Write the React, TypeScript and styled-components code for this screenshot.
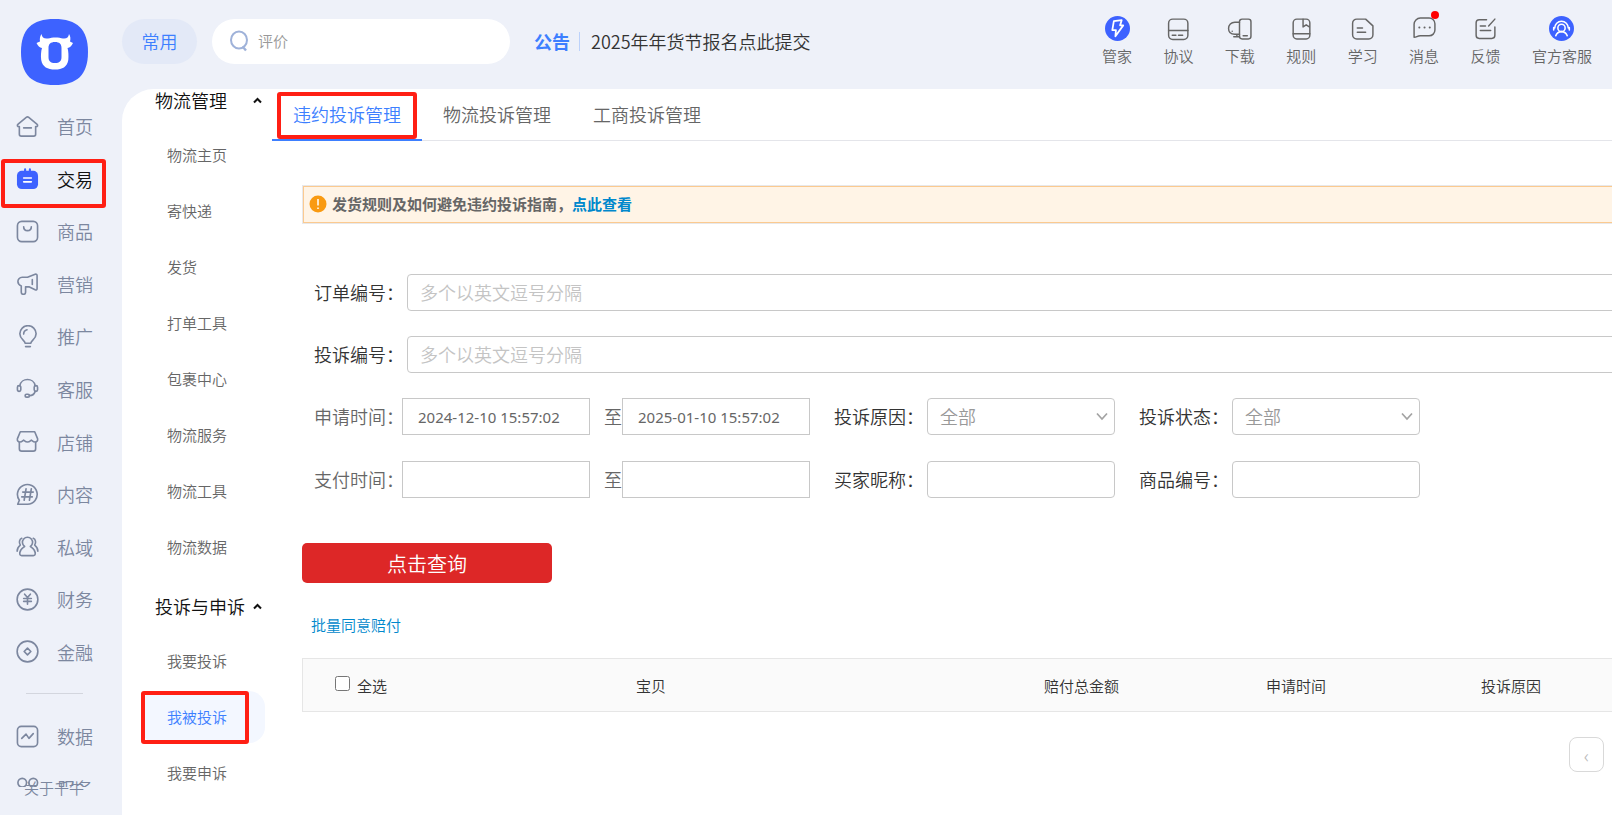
import React, { useState } from "react";
import styled, { createGlobalStyle, css } from "styled-components";

const fontStack = `"Noto Sans CJK SC", "Liberation Sans", sans-serif`;

const GlobalStyle = createGlobalStyle`
  *, *::before, *::after { box-sizing: border-box; }
  body {
    margin: 0;
    overflow: hidden;
    background: #eef1f9;
    font-family: ${fontStack};
    font-weight: 350;
    color: #333;
  }
  button, input, select { font: inherit; color: inherit; }
  button { padding: 0; border: 0; background: none; cursor: pointer; }
  a { color: inherit; text-decoration: none; }
  ul { margin: 0; padding: 0; list-style: none; }
`;

const Shell = styled.div`
  display: flex;
  height: 100vh;
`;

/* ---------- left rail ---------- */

const Rail = styled.aside`
  flex: 0 0 122px;
  display: flex;
  flex-direction: column;
  color: #7c879f;
`;

const LogoLink = styled.a`
  display: block;
  width: 67px;
  height: 66px;
  margin: 19px 0 0 21px;
  flex: none;
`;

const RailNav = styled.nav`
  flex: 1;
  min-height: 0;
  padding-top: 15px;
  overflow: hidden;
`;

const RailList = styled.ul<{ $height?: number }>`
  display: grid;
  grid-auto-rows: ${(p) => (p.$height ? "1fr" : "52px")};
  height: ${(p) => (p.$height ? `${p.$height}px` : "auto")};
`;

const RailItem = styled.li`
  position: relative;
  display: grid;
`;

const RailLink = styled.a<{ $active?: boolean }>`
  display: flex;
  align-items: center;
  gap: 18px;
  padding-left: 16px;
  font-size: 18px;
  line-height: 24px;
  color: ${(p) => (p.$active ? "#111" : "#7c879f")};
`;

const RailDivider = styled.hr`
  width: 57px;
  height: 1px;
  margin: 15px 0 16px 26px;
  border: 0;
  background: #d3d6de;
`;

const RailFooter = styled.div`
  flex: 0 0 28px;
  padding-left: 24px;
`;

const AboutLink = styled.a`
  position: relative;
  display: block;
  margin-top: -9px;
  font-size: 15px;
  line-height: 20px;
`;

const Highlight = styled.span<{ $top: number; $left: number; $w: number; $h: number }>`
  position: absolute;
  z-index: 1;
  top: ${(p) => p.$top}px;
  left: ${(p) => p.$left}px;
  width: ${(p) => p.$w}px;
  height: ${(p) => p.$h}px;
  border: 4px solid #ff1f14;
  border-radius: 3px;
  pointer-events: none;
`;

/* ---------- top bar ---------- */

const Workspace = styled.div`
  flex: 1;
  min-width: 0;
  display: flex;
  flex-direction: column;
`;

const TopBar = styled.header`
  flex: 0 0 89px;
  display: flex;
  align-items: flex-start;
  padding-right: 20px;
`;

const CommonButton = styled.button`
  flex: none;
  width: 75px;
  height: 45px;
  margin-top: 19px;
  padding-bottom: 2px;
  border-radius: 23px;
  background: #e3e9f7;
  color: #3d7fff;
  font-size: 18px;
`;

const Search = styled.label`
  flex: 0 0 298px;
  display: flex;
  align-items: center;
  gap: 8px;
  height: 45px;
  margin: 19px 0 0 15px;
  padding: 0 0 2px 17px;
  border-radius: 23px;
  background: #fff;
`;

const SearchInput = styled.input`
  flex: 1;
  min-width: 0;
  margin-right: 20px;
  padding: 0;
  border: 0;
  outline: 0;
  background: none;
  font-size: 15px;
  &::placeholder { color: #999; opacity: 1; }
`;

const Notice = styled.div`
  display: flex;
  align-items: center;
  height: 45px;
  margin: 19px auto 0 24px;
  padding-bottom: 1px;
  font-size: 18px;
  white-space: nowrap;
`;

const NoticeTag = styled.strong`
  padding-right: 9px;
  color: #3d7fff;
  font-weight: 700;
`;

const NoticeLink = styled.a`
  padding-left: 11px;
  border-left: 1px solid #bcd2fb;
  line-height: 19px;
  color: #333;
`;

const Tools = styled.nav`
  flex: 0 0 490px;
  display: flex;
  justify-content: space-between;
  margin-top: 16px;
`;

const Tool = styled.a`
  position: relative;
  display: flex;
  flex-direction: column;
  align-items: center;
  gap: 3px;
  color: #666;
  font-size: 15px;
  line-height: 24px;
  white-space: nowrap;
`;

const Dot = styled.i`
  position: absolute;
  top: -5px;
  right: 0;
  width: 8px;
  height: 8px;
  border-radius: 50%;
  background: #ff0000;
`;

/* ---------- body ---------- */

const Panel = styled.div`
  flex: 1;
  min-height: 0;
  display: flex;
  border-top-left-radius: 32px;
  background: #fff;
  overflow: hidden;
`;

const SubMenu = styled.nav`
  flex: 0 0 150px;
  overflow: hidden;
`;

const SubGroup = styled.section`
  & + & { margin-top: 22px; }
`;

const SubHeading = styled.button<{ $gap: number }>`
  display: flex;
  align-items: center;
  gap: ${(p) => p.$gap}px;
  height: 24px;
  margin-bottom: 16px;
  padding: 0 0 2px 33px;
  font-size: 18px;
  line-height: 20px;
  color: #111;
`;

const SubList = styled.ul`
  display: flex;
  flex-direction: column;
  gap: 4px;
`;

const SubItem = styled.li`
  position: relative;
  padding: 0 7px 0 19px;
`;

const SubLink = styled.a<{ $active?: boolean }>`
  display: block;
  padding-left: 26px;
  border-radius: 16px;
  background: ${(p) => (p.$active ? "#f3f7ff" : "transparent")};
  color: ${(p) => (p.$active ? "#3d7fff" : "#666")};
  font-size: 15px;
  line-height: 52px;
`;

const Main = styled.main`
  flex: 1;
  min-width: 0;
  overflow: hidden;
`;

const Tabs = styled.div`
  display: flex;
  height: 52px;
  border-bottom: 1px solid #e4e5ea;
`;

const Tab = styled.button<{ $active?: boolean }>`
  position: relative;
  width: 150px;
  height: 52px;
  font-size: 18px;
  color: ${(p) => (p.$active ? "#3d7fff" : "#666")};
  border-bottom: 2px solid ${(p) => (p.$active ? "#3d7fff" : "transparent")};
`;

const Content = styled.div`
  min-width: 1380px;
  padding: 44px 0 0 30px;
`;

const Alert = styled.p`
  display: flex;
  align-items: center;
  gap: 5px;
  height: 39px;
  margin: 0 0 50px;
  padding: 0 0 2px 6px;
  border: 1px solid #e8e8ea;
  box-shadow: inset 0 0 0 1px #fbca90;
  background: #fff4e6;
  font-size: 15px;
  font-weight: 700;
  color: #666;
`;

const BlueLink = styled.a`
  color: #0088cc;
`;

const Form = styled.form`
  display: flex;
  flex-direction: column;
  gap: 25px;
  align-items: stretch;
`;

const Row = styled.div`
  display: flex;
  align-items: center;
  height: 37px;
  padding-left: 12px;
  font-size: 18px;
  &:last-child { margin-top: 1px; }
`;

const FieldLabel = styled.label<{ $w: number; $muted?: boolean }>`
  flex: 0 0 ${(p) => p.$w}px;
  min-width: 0;
  padding-bottom: 2px;
  color: ${(p) => (p.$muted ? "#666" : "#333")};
  white-space: nowrap;
`;

const FieldGap = styled.span`
  flex: 0 0 24px;
`;

const control = css`
  height: 37px;
  border: 1px solid #c8c8c8;
  background: #fff;
  outline: 0;
`;

const WideInput = styled.input`
  ${control}
  flex: 1;
  min-width: 0;
  padding: 0 12px 2px;
  border-radius: 4px;
  &::placeholder { color: #c4c4c4; opacity: 1; }
`;

const SmallInput = styled.input`
  ${control}
  flex: 0 0 188px;
  width: 188px;
  padding: 0 12px 2px;
  border-radius: 4px;
`;

const DateInput = styled.input`
  ${control}
  flex: 0 0 188px;
  width: 188px;
  padding: 0 15px;
  font-family: "Noto Sans", sans-serif;
  font-size: 15px;
  font-weight: 400;
  color: #666;
`;

const To = styled.span`
  flex: 0 0 32px;
  padding: 0 0 2px 14px;
  color: #666;
`;

const SelectBox = styled.span`
  position: relative;
  flex: 0 0 188px;
  display: flex;
  & svg {
    position: absolute;
    top: 14px;
    right: 7px;
    pointer-events: none;
  }
`;

const Select = styled.select`
  ${control}
  width: 100%;
  padding: 0 12px 2px;
  border-radius: 4px;
  appearance: none;
  color: #999;
`;

const QueryButton = styled.button`
  width: 250px;
  height: 40px;
  margin: 45px 0 30px;
  border-radius: 5px;
  background: #dd2727;
  color: #fff;
  font-size: 20px;
`;

const BatchLink = styled(BlueLink)`
  display: block;
  width: max-content;
  margin: 0 0 21px 9px;
  font-size: 15px;
  line-height: 24px;
`;

const Table = styled.table`
  width: 100%;
  table-layout: fixed;
  border-collapse: collapse;
  background: #fafafa;
  border: 1px solid #e6e6e6;
`;

const Th = styled.th<{ $w?: number; $shift?: number; $left?: number }>`
  width: ${(p) => (p.$w ? `${p.$w}px` : "auto")};
  height: 53px;
  padding: 2px ${(p) => p.$shift || 0}px 0 ${(p) => p.$left || 0}px;
  text-align: ${(p) => (p.$left ? "left" : "center")};
  font-size: 15px;
  font-weight: 350;
  line-height: 24px;
  white-space: nowrap;
`;

const CheckLabel = styled.label`
  display: flex;
  align-items: center;
  gap: 7px;
`;

const Check = styled.input`
  width: 15px;
  height: 15px;
  margin: 0 0 6px;
`;

const Pager = styled.div`
  display: flex;
  justify-content: flex-end;
  padding: 25px 48px 0 0;
`;

const PageButton = styled.button`
  width: 35px;
  height: 35px;
  border: 1px solid #d9d9d9;
  border-radius: 8px;
  color: #bbb;
  font-size: 18px;
`;

/* ---------- drawings ---------- */

const Icon = ({ children, size = 23 }: { children: React.ReactNode; size?: number }) => (
  <svg
    width={size}
    height={size}
    viewBox="0 0 24 24"
    fill="none"
    stroke="currentColor"
    strokeWidth="1.7"
    strokeLinecap="round"
    strokeLinejoin="round"
    aria-hidden="true"
  >
    {children}
  </svg>
);

const Logo = () => (
  <svg width="67" height="66" viewBox="0 0 67 66" aria-hidden="true">
    <path
      d="M33.500 0C56 0 67 10 67 33S56 66 33.500 66 0 56 0 33 11 0 33.500 0Z"
      fill="#3d62ff"
    />
    <path
      fill="#fff"
      fillRule="evenodd"
      d="M20.500 15C21 18.500 23 20 27 19.500 31 18 38 18 42 19.500 45.500 20 47.500 18.500 48 15 49.500 17 49.800 20 49 22.500L52 24C50.500 27 49 28.500 46.500 29C47.500 32 47.700 37 47.300 41 46 48 41.500 50.500 34 50.500S21.500 48 20.200 41C19.700 37 20 32 21 29 18.500 28.500 17 27 15.500 24L19 22.500C18.500 20 19 17 20.500 15ZM34 23C29.500 23 27.500 25 27.500 29V38C27.500 42 29.500 44 34 44S40.500 42 40.500 38V29C40.500 25 38.500 23 34 23Z"
    />
  </svg>
);

const Chevron = ({ up }: { up?: boolean }) => (
  <svg width={up ? 9 : 12} height={up ? 7 : 9} viewBox={up ? "0 0 9 7" : "0 0 12 9"} fill="none" aria-hidden="true">
    {up ? (
      <path d="M1 5.500 4.500 2 8 5.500" stroke="#111" strokeWidth="2" />
    ) : (
      <path d="M1 1.500 6 7 11 1.500" stroke="#a3a3a3" strokeWidth="1.700" />
    )}
  </svg>
);

const railMain = [
  { name: "首页", icon: <path d="M3.500 12v8a2 2 0 0 0 2 2h13a2 2 0 0 0 2-2v-8M3.500 12.500c-2.200-.3-2.700-1.700-1.300-2.900L10.700 2.500a2 2 0 0 1 2.600 0L21.800 9.600c1.400 1.200.9 2.600-1.300 2.900M8 13.500h8" /> },
  {
    name: "交易",
    icon: (
      <g stroke="none">
        <rect x="1" y="4" width="22" height="19" rx="5" fill="#3d62ff" />
        <path d="M9.500 2.500v3M14.500 2.500v3" stroke="#3d62ff" strokeWidth="2.200" />
        <path d="M8 11.500h8M8 15.500h8" stroke="#fff" strokeWidth="1.700" />
      </g>
    ),
  },
  { name: "商品", icon: <><rect x="1.500" y="1.500" width="21" height="21" rx="4.500" /><path d="M8 7c0 5.500 8 5.500 8 0" /></> },
  { name: "营销", icon: <><path d="M6.500 5.500H12L20 2.300c1.200-.4 2 .2 2 1.400v13.600c0 1.200-.8 1.800-2 1.300l-6.500-3.100H10v5.500a2 2 0 0 1-4.500 0v-6.500C3 13.500 2 12 2 10s1.500-4.500 4.500-4.500Z" /><path d="M17 8v5" /></> },
  { name: "推广", icon: <><path d="M9.500 19c0-3-5.500-4-5.500-9.800a8.500 8.500 0 0 1 17 0C21 15 15.500 16 15.500 19ZM10 22.500h5" /><path d="M8 9.500c0-2.500 1.500-4 3.500-4.500" /></> },
  { name: "客服", icon: <><path d="M4 9C5.500 0.500 18.500 0.500 20 9M20 15c-1 3-2.500 4.500-6 4.500" /><rect x="1.500" y="9" width="3.500" height="6" rx="1.700" /><rect x="19" y="9" width="3.500" height="6" rx="1.700" /><rect x="9.500" y="18" width="4.500" height="3" rx="1.500" /></> },
  { name: "店铺", icon: <><path d="M4.500 1.800h15L22.500 9c.5 2.200-.6 3.500-2.500 3.500-2 0-2.700-1-4-2-1.300 1-2.200 2-4 2s-2.700-1-4-2c-1.300 1-2 2-4 2-1.900 0-3-1.300-2.500-3.500Z" /><path d="M3.500 13v6.500A2.500 2.500 0 0 0 6 22h12a2.500 2.500 0 0 0 2.500-2.500V13" /></> },
  { name: "内容", icon: <><path d="M1.800 22.200H12A10.300 10.300 0 1 0 3.500 18Z" /><path d="m10.500 6-2 12M16 6l-2 12M7 9.500h11M6 14.500h11" /></> },
  { name: "私域", icon: <><path d="M9 12a5.300 5.300 0 1 1 6 0c1 1.200 4.500 2 5 6.500.3 2-.3 3-2 3H6c-1.700 0-2.300-1-2-3 .5-4.500 4-5.300 5-6.500Z" /><path d="M6 3.500C3.500 4.500 2.800 8 4.500 10.500 2.500 12 1.200 14.500 1.200 17M18 3.500c2.500 1 3.200 4.500 1.500 7 2 1.500 3.300 4 3.300 6.500" /></> },
  { name: "财务", icon: <><circle cx="12" cy="12" r="10.800" /><path d="m9 6.500 3 3.500 3-3.500M12 10v7M8 11h8M8 14h8" /></> },
  { name: "金融", icon: <><circle cx="12" cy="12" r="10.800" /><path d="m12 8.500 3.500 3.500-3.500 3.500L8.500 12Z" /></> },
];

const railMore = [
  { name: "数据", icon: <><rect x="1.500" y="1.500" width="21" height="21" rx="4" /><path d="m6 14 4.500-4.500 3 4.500L18 9" /></> },
  { name: "服务", icon: <><circle cx="6.500" cy="6" r="4.500" /><circle cx="18" cy="6" r="4.500" /><circle cx="6.500" cy="18" r="4.500" /><circle cx="18" cy="18" r="4.500" /></> },
];

const tools = [
  { name: "管家", icon: <><circle cx="12" cy="12" r="12" fill="#3d62ff" stroke="none" /><path d="M8.500 5 16 4 14.500 9H17.500L10 19.500 10.500 13.500H7Z" stroke="#fff" /></> },
  { name: "协议", icon: <g strokeWidth="1.400"><rect x="2.500" y="3" width="18.500" height="19.500" rx="4" /><path d="M2.500 14H21M6 18.500h3.500M12 18.500h4" /></g> },
  { name: "下载", icon: <g strokeWidth="1.400"><rect x="12" y="3" width="11" height="19" rx="2.500" /><path d="M12 6H7.500C4 6 1.500 8.500 1.500 12S4 17.500 7.500 17.500H12M9.500 17.500v2.500M6.500 20H12M15.500 19h4M5 14.500v.1" /></g> },
  { name: "规则", icon: <g strokeWidth="1.400"><rect x="4" y="3" width="16" height="19" rx="3.500" /><path d="M13.500 3V10.500l3-2 3 2M4 17h16" /></g> },
  { name: "学习", icon: <g strokeWidth="1.400"><path d="M6.500 3H15L22 9.500v8.500a4 4 0 0 1-4 4H6.500a4 4 0 0 1-4-4v-11a4 4 0 0 1 4-4ZM7 11.500h5M7 15.500h8" /></g> },
  { name: "消息", dot: true, icon: <g strokeWidth="1.400"><path d="M2 20.500V8a6 6 0 0 1 6-6h8.500a5.500 5.500 0 0 1 5.500 5.500v6a5.500 5.500 0 0 1-5.500 5.500H8C5 19 4.500 20.500 2 20.500Z" /><path d="M7 11h.1M12 11h.1M17 11h.1" strokeWidth="1.900" /></g> },
  { name: "反馈", icon: <g strokeWidth="1.400"><path d="M13 3.500H6a3 3 0 0 0-3 3v12a3 3 0 0 0 3 3h12a3 3 0 0 0 3-3v-8M15 9.500l6-6.500M7 9.500h5M7 14h10" /></g> },
  { name: "官方客服", icon: <><circle cx="12" cy="12" r="12" fill="#3d62ff" stroke="none" /><g stroke="#fff" strokeWidth="1.500"><circle cx="12" cy="11.500" r="3.500" /><path d="M6.500 19c1-3 2.500-4 5.500-4s4.500 1 5.500 4M5.500 11.500a6.500 6.500 0 0 1 13 0M4.500 11v2.500M19.500 11v2.500" /></g></> },
];

const subGroups = [
  { title: "物流管理", gap: 26, items: ["物流主页", "寄快递", "发货", "打单工具", "包裹中心", "物流服务", "物流工具", "物流数据"] },
  { title: "投诉与申诉", gap: 8, items: ["我要投诉", "我被投诉", "我要申诉"] },
];

const tabNames = ["违约投诉管理", "物流投诉管理", "工商投诉管理"];

const RailEntries = ({ items, height }: { items: { name: string; icon: React.ReactNode }[]; height?: number }) => (
  <RailList $height={height}>
    {items.map((item) => (
      <RailItem key={item.name}>
        <RailLink href="#" $active={item.name === "交易"}>
          <Icon>{item.icon}</Icon>
          {item.name}
        </RailLink>
        {item.name === "交易" && <Highlight $top={6} $left={1} $w={105} $h={49} />}
      </RailItem>
    ))}
  </RailList>
);

export default function App() {
  const [from, setFrom] = useState("2024-12-10 15:57:02");
  const [to, setTo] = useState("2025-01-10 15:57:02");

  return (
    <>
      <GlobalStyle />
      <Shell>
        <Rail>
          <LogoLink href="#" aria-label="千牛">
            <Logo />
          </LogoLink>
          <RailNav>
            <RailEntries items={railMain} height={578} />
            <RailDivider />
            <RailEntries items={railMore} />
          </RailNav>
          <RailFooter>
            <AboutLink href="#">关于千牛</AboutLink>
          </RailFooter>
        </Rail>

        <Workspace>
          <TopBar>
            <CommonButton type="button">常用</CommonButton>
            <Search>
              <svg width="21" height="22" viewBox="0 0 21 22" fill="none" stroke="#9fb2d9" strokeWidth="2" aria-hidden="true">
                <ellipse cx="10" cy="10" rx="8" ry="8.500" />
                <path d="m13.500 16.500 3.500 4" strokeWidth="2.400" />
              </svg>
              <SearchInput type="text" placeholder="评价" aria-label="搜索" />
            </Search>
            <Notice>
              <NoticeTag>公告</NoticeTag>
              <NoticeLink href="#">2025年年货节报名点此提交</NoticeLink>
            </Notice>
            <Tools>
              {tools.map((tool) => (
                <Tool key={tool.name} href="#">
                  <Icon size={25}>{tool.icon}</Icon>
                  {tool.name}
                  {tool.dot && <Dot />}
                </Tool>
              ))}
            </Tools>
          </TopBar>

          <Panel>
            <SubMenu>
              {subGroups.map((group) => (
                <SubGroup key={group.title}>
                  <SubHeading type="button" $gap={group.gap}>
                    {group.title}
                    <Chevron up />
                  </SubHeading>
                  <SubList>
                    {group.items.map((name) => (
                      <SubItem key={name}>
                        <SubLink href="#" $active={name === "我被投诉"}>
                          {name}
                        </SubLink>
                        {name === "我被投诉" && <Highlight $top={0} $left={19} $w={108} $h={53} />}
                      </SubItem>
                    ))}
                  </SubList>
                </SubGroup>
              ))}
            </SubMenu>

            <Main>
              <Tabs>
                {tabNames.map((name, i) => (
                  <Tab key={name} type="button" $active={i === 0}>
                    {name}
                    {i === 0 && <Highlight $top={3} $left={5} $w={140} $h={47} />}
                  </Tab>
                ))}
              </Tabs>

              <Content>
                <Alert>
                  <svg width="18" height="18" viewBox="0 0 18 18" aria-hidden="true">
                    <circle cx="9" cy="9" r="8.500" fill="#f99a11" />
                    <path d="M9 4v6.500M9 12.500v1.600" stroke="#fff" strokeWidth="1.500" />
                  </svg>
                  <span>
                    发货规则及如何避免违约投诉指南，<BlueLink href="#">点此查看</BlueLink>
                  </span>
                </Alert>

                <Form onSubmit={(e) => e.preventDefault()}>
                  <Row>
                    <FieldLabel htmlFor="order" $w={93}>订单编号：</FieldLabel>
                    <WideInput id="order" placeholder="多个以英文逗号分隔" />
                  </Row>
                  <Row>
                    <FieldLabel htmlFor="complaint" $w={93}>投诉编号：</FieldLabel>
                    <WideInput id="complaint" placeholder="多个以英文逗号分隔" />
                  </Row>
                  <Row>
                    <FieldLabel htmlFor="apply-from" $w={88} $muted>申请时间：</FieldLabel>
                    <DateInput id="apply-from" value={from} onChange={(e) => setFrom(e.target.value)} />
                    <To>至</To>
                    <DateInput aria-label="申请时间至" value={to} onChange={(e) => setTo(e.target.value)} />
                    <FieldGap />
                    <FieldLabel htmlFor="reason" $w={93}>投诉原因：</FieldLabel>
                    <SelectBox>
                      <Select id="reason"><option>全部</option></Select>
                      <Chevron />
                    </SelectBox>
                    <FieldGap />
                    <FieldLabel htmlFor="status" $w={93}>投诉状态：</FieldLabel>
                    <SelectBox>
                      <Select id="status"><option>全部</option></Select>
                      <Chevron />
                    </SelectBox>
                  </Row>
                  <Row>
                    <FieldLabel htmlFor="pay-from" $w={88} $muted>支付时间：</FieldLabel>
                    <DateInput id="pay-from" />
                    <To>至</To>
                    <DateInput aria-label="支付时间至" />
                    <FieldGap />
                    <FieldLabel htmlFor="buyer" $w={93}>买家昵称：</FieldLabel>
                    <SmallInput id="buyer" />
                    <FieldGap />
                    <FieldLabel htmlFor="item" $w={93}>商品编号：</FieldLabel>
                    <SmallInput id="item" />
                  </Row>
                </Form>

                <QueryButton type="button">点击查询</QueryButton>
                <BatchLink href="#">批量同意赔付</BatchLink>

                <Table>
                  <thead>
                    <tr>
                      <Th $w={100} $left={32}>
                        <CheckLabel>
                          <Check type="checkbox" />
                          全选
                        </CheckLabel>
                      </Th>
                      <Th $w={572} $shift={75}>宝贝</Th>
                      <Th $w={214}>赔付总金额</Th>
                      <Th $w={215}>申请时间</Th>
                      <Th $w={215}>投诉原因</Th>
                      <Th />
                    </tr>
                  </thead>
                </Table>

                <Pager>
                  <PageButton type="button" aria-label="上一页">‹</PageButton>
                </Pager>
              </Content>
            </Main>
          </Panel>
        </Workspace>
      </Shell>
    </>
  );
}
